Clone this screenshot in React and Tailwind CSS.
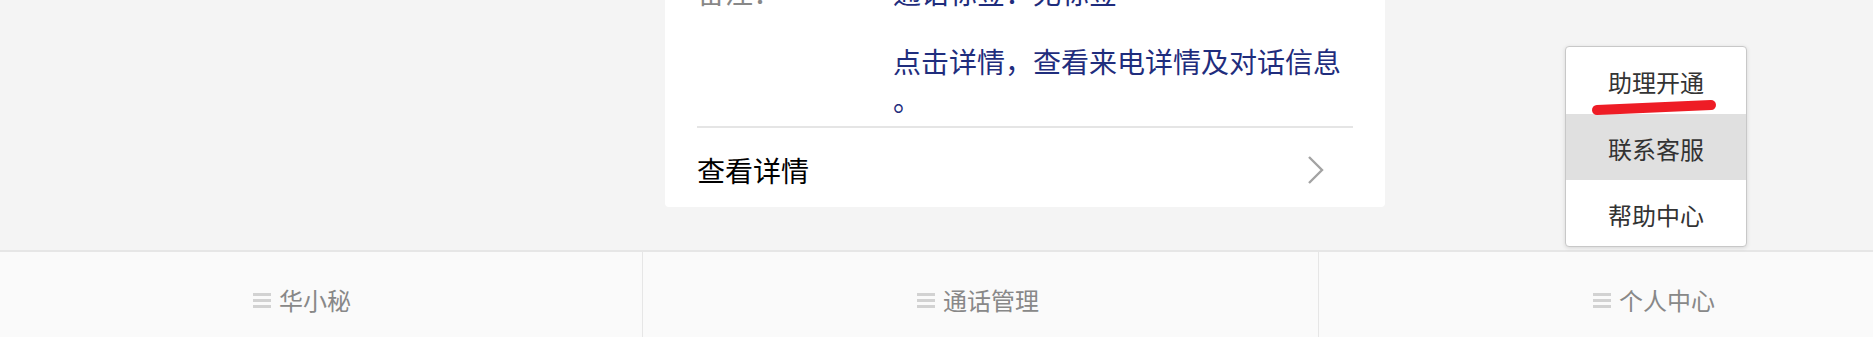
import React from 'react';

const font = { fontFamily: '"Noto Sans CJK SC", "Noto Sans", sans-serif' };

const NavIcon = () => (
  <div className="flex flex-col gap-[3px] w-[18px]">
    <div className="h-[3px] bg-[#d2d2d2]"></div>
    <div className="h-[3px] bg-[#d2d2d2]"></div>
    <div className="h-[3px] bg-[#d2d2d2]"></div>
  </div>
);

const NavItem = ({ label, className }) => (
  <div className={`flex items-center ${className}`}>
    <NavIcon />
    <span className="ml-[8px] text-[24px] leading-[24px] text-[#888]">{label}</span>
  </div>
);

const App = () => {
  return (
    <div className="relative h-[337px] w-full overflow-hidden bg-[#f4f4f4]" style={font}>
      {/* card area */}
      <div className="h-[250px] overflow-hidden">
        <div className="ml-[665px] -mt-[27px] w-[720px] rounded-[4px] bg-white px-[32px]">
          <div className="flex text-[28px] leading-[38px]">
            <div className="w-[196px] shrink-0 text-[#888]">备注：</div>
            <div className="flex-1 text-[#1f2d7d]">
              <p>通话标签：无标签</p>
              <p className="mt-[31px]">
                点击详情，查看来电详情及对话信息
                <br />。
              </p>
            </div>
          </div>
          <div className="mt-[8px] h-[2px] bg-[#e5e5e5]"></div>
          <div className="flex h-[79px] items-center justify-between pt-[4px]">
            <span className="text-[28px] leading-[38px] text-black">查看详情</span>
            <svg width="17" height="30" viewBox="0 0 17 30" className="mr-[29px]">
              <polyline points="2,2 15,15 2,28" fill="none" stroke="#a3a3a3" strokeWidth="2.4" />
            </svg>
          </div>
        </div>
      </div>

      {/* bottom tab bar */}
      <div className="flex h-[98px] border-t-2 border-[#e6e6e6] bg-[#fafafa]">
        <NavItem label="华小秘" className="w-[643px] border-r border-[#e6e6e6] pl-[253px]" />
        <NavItem label="通话管理" className="w-[676px] border-r border-[#e6e6e6] pl-[274px]" />
        <NavItem label="个人中心" className="flex-1 pl-[274px]" />
      </div>

      {/* popup menu */}
      <div className="absolute left-[1565px] top-[46px] w-[182px] overflow-hidden rounded-[4px] border border-[#c8c8c8] bg-white shadow-[0_1px_4px_rgba(0,0,0,0.12)]">
        <div className="flex h-[67px] items-center justify-center pt-[3px] text-[24px] leading-[24px] text-[#333]">助理开通</div>
        <div className="flex h-[66px] items-center justify-center bg-[#e0e0e0] pt-[4px] text-[24px] leading-[24px] text-[#333]">联系客服</div>
        <div className="flex h-[66px] items-center justify-center pt-[4px] text-[24px] leading-[24px] text-[#333]">帮助中心</div>
      </div>

      {/* red hand-drawn underline */}
      <svg className="absolute left-[1590px] top-[98px]" width="130" height="18" viewBox="0 0 130 18">
        <path d="M7 12 Q 50 10 121 7" fill="none" stroke="#ee1c25" strokeWidth="10" strokeLinecap="round" />
      </svg>
    </div>
  );
};

export default App;
